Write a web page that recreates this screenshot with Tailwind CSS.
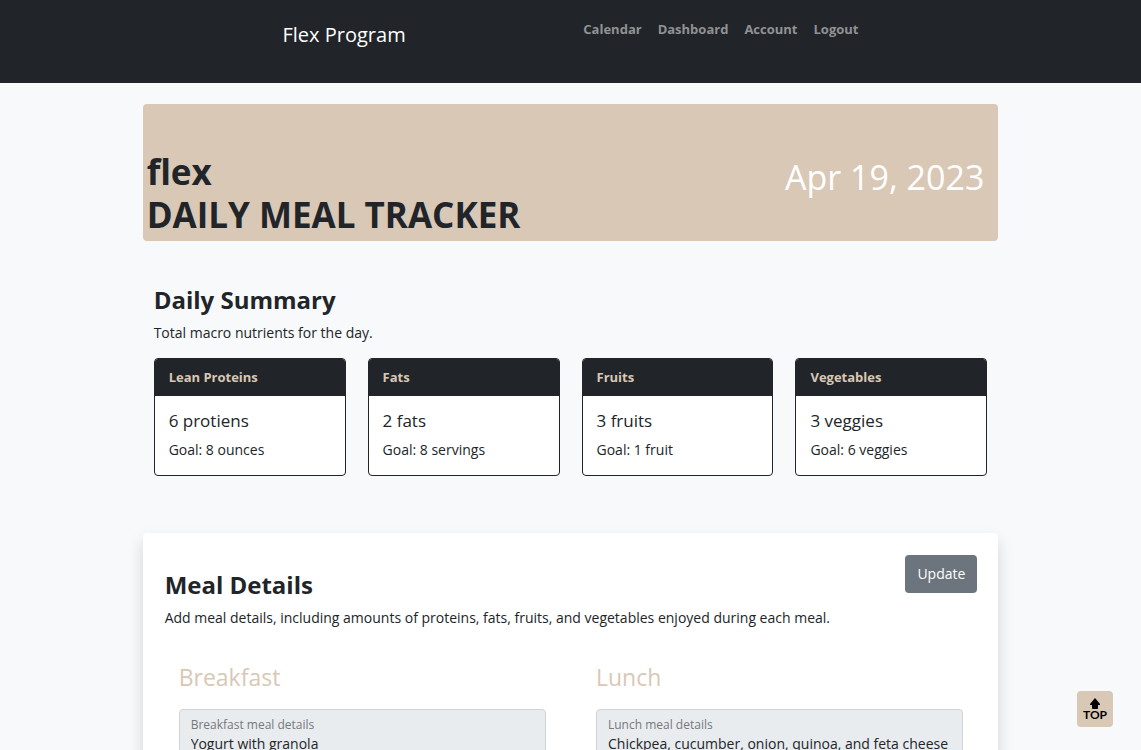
<!DOCTYPE html>
<html lang="en">
<head>
<meta charset="utf-8">
<meta name="viewport" content="width=device-width, initial-scale=1">
<title>Flex Program</title>
<script src="https://cdn.jsdelivr.net/npm/@tailwindcss/browser@4"></script>
</head>
<body class="bg-[#f8f9fa] font-['Segoe_UI','Open_Sans',sans-serif] text-sm leading-[21px] text-[#212529]">
<header class="h-[83px] bg-[#212529]">
  <nav class="mx-auto flex w-[576px] items-start justify-between pt-4">
    <a href="#" class="text-[20px] leading-[38px] text-white">Flex Program</a>
    <ul class="flex gap-4 pt-[3px] text-[13px] font-bold text-[#909294]">
      <li><a href="#">Calendar</a></li>
      <li><a href="#">Dashboard</a></li>
      <li><a href="#">Account</a></li>
      <li><a href="#">Logout</a></li>
    </ul>
  </nav>
</header>
<main class="mx-auto w-3/4">
  <section class="mt-[21px] flex items-end justify-between rounded bg-[#d9c8b6] pt-[46px] pr-3.5 pb-[5px] pl-1">
    <h1 class="text-[35px] leading-[43px] font-bold">flex<br>DAILY MEAL TRACKER</h1>
    <p class="mb-[37px] text-[34px] leading-[43px] text-white">Apr 19, 2023</p>
  </section>
  <section class="px-[11px] pt-11">
    <h2 class="text-2xl leading-[30px] font-bold">Daily Summary</h2>
    <p class="mt-[7px]">Total macro nutrients for the day.</p>
    <div class="mt-[15px] grid grid-cols-4 gap-[22px]">
      <article class="overflow-hidden rounded border border-[#212529] bg-white">
        <h3 class="bg-[#212529] px-3.5 py-2 text-[13px] font-bold text-[#d9c8b6]">Lean Proteins</h3>
        <div class="px-3.5 pt-3.5 pb-[15px]"><p class="text-[17px] font-medium">6 protiens</p><p class="mt-2">Goal: 8 ounces</p></div>
      </article>
      <article class="overflow-hidden rounded border border-[#212529] bg-white">
        <h3 class="bg-[#212529] px-3.5 py-2 text-[13px] font-bold text-[#d9c8b6]">Fats</h3>
        <div class="px-3.5 pt-3.5 pb-[15px]"><p class="text-[17px] font-medium">2 fats</p><p class="mt-2">Goal: 8 servings</p></div>
      </article>
      <article class="overflow-hidden rounded border border-[#212529] bg-white">
        <h3 class="bg-[#212529] px-3.5 py-2 text-[13px] font-bold text-[#d9c8b6]">Fruits</h3>
        <div class="px-3.5 pt-3.5 pb-[15px]"><p class="text-[17px] font-medium">3 fruits</p><p class="mt-2">Goal: 1 fruit</p></div>
      </article>
      <article class="overflow-hidden rounded border border-[#212529] bg-white">
        <h3 class="bg-[#212529] px-3.5 py-2 text-[13px] font-bold text-[#d9c8b6]">Vegetables</h3>
        <div class="px-3.5 pt-3.5 pb-[15px]"><p class="text-[17px] font-medium">3 veggies</p><p class="mt-2">Goal: 6 veggies</p></div>
      </article>
    </div>
  </section>
  <section class="mt-[57px] rounded bg-white pt-[22px] pr-[21px] pb-8 pl-[22px] shadow-[0_8px_16px_rgba(0,0,0,0.15)]">
    <div class="flex items-start justify-between">
      <h2 class="mt-[15px] text-2xl leading-[30px] font-bold">Meal Details</h2>
      <button type="button" class="rounded bg-[#6c757d] px-3 py-2 leading-[22px] text-white">Update</button>
    </div>
    <p class="mt-[7px]">Add meal details, including amounts of proteins, fats, fruits, and vegetables enjoyed during each meal.</p>
    <div class="mt-[34px] grid grid-cols-2 gap-[50px] px-3.5">
      <div>
        <h3 class="text-[23px] leading-[30px] text-[#d9c8b6]">Breakfast</h3>
        <div class="mt-[17px] rounded-sm border border-[#ced4da] bg-[#e9ecef] px-[11px] pt-[5px] pb-2">
          <label for="breakfast" class="block text-xs leading-[19px] text-[#75797c]">Breakfast meal details</label>
          <textarea id="breakfast" rows="3" readonly class="block w-full resize-none leading-5 outline-none">Yogurt with granola</textarea>
        </div>
      </div>
      <div>
        <h3 class="text-[23px] leading-[30px] text-[#d9c8b6]">Lunch</h3>
        <div class="mt-[17px] rounded-sm border border-[#ced4da] bg-[#e9ecef] px-[11px] pt-[5px] pb-2">
          <label for="lunch" class="block text-xs leading-[19px] text-[#75797c]">Lunch meal details</label>
          <textarea id="lunch" rows="3" readonly class="block w-full resize-none leading-5 outline-none">Chickpea, cucumber, onion, quinoa, and feta cheese</textarea>
        </div>
      </div>
    </div>
  </section>
</main>
<a href="#" class="fixed right-7 bottom-[23px] flex size-9 flex-col items-center rounded bg-[#d9c8b6] pt-[7px] text-black">
  <svg class="h-[11px] w-2.5 shrink-0" viewBox="0 0 10 11" aria-hidden="true"><path fill="currentColor" d="M5 0L10 6V7H8V10Q8 11 7 11H3Q2 11 2 10V7H0V6Z"/></svg>
  <span class="font-['Lato',sans-serif] text-xs leading-3 font-bold">TOP</span>
</a>
</body>
</html>
